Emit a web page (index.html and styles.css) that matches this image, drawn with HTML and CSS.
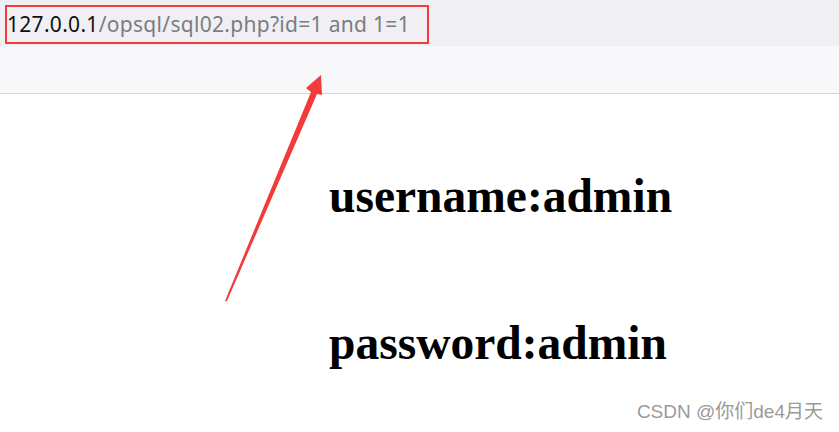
FILE: index.html
```html
<!DOCTYPE html>
<html lang="en">
<head>
    <meta charset="UTF-8">
    <title>sql02</title>
    <link rel="stylesheet" href="styles.css">
</head>
<body>
    <div class="address-bar">
        <div class="url-box">
            <span class="host">127.0.0.1</span><span class="path">/opsql/sql02.php?id=1 and 1=1</span>
        </div>
    </div>
    <div class="toolbar"></div>

    <div class="page">
        <h1>username:admin</h1>
        <h1>password:admin</h1>
    </div>

    <!-- annotation arrow drawn over the screenshot -->
    <svg class="arrow" width="839" height="432" viewBox="0 0 839 432">
        <polygon points="225,301 311,92 306,88 321,75 322,95 317,94 227,301" fill="#f23b3b"/>
    </svg>

    <div class="watermark">CSDN @你们de4月天</div>
</body>
</html>
```

FILE: styles.css
```css
* { box-sizing: border-box; }
body {
    margin: 0;
    background-color: #ffffff;
    font-family: "Liberation Serif", "Times New Roman", serif;
    width: 839px;
    height: 432px;
    overflow: hidden;
    position: relative;
}
.address-bar {
    height: 46px;
    background-color: #f0f0f4;
    padding: 5px 0 0 5px;
}
.url-box {
    width: 424px;
    height: 39px;
    border: 2px solid #f23b3b;
    padding: 4px 0 0 0;
    font-family: "Noto Sans", sans-serif;
    font-size: 21px;
    letter-spacing: 0.3px;
    line-height: 27px;
    white-space: nowrap;
}
.url-box .host {
    color: #111111;
}
.url-box .path {
    color: #7c7c80;
}
.toolbar {
    height: 48px;
    background-color: #f8f8fa;
    border-bottom: 1px solid #d4d4d6;
}
.page {
    padding: 78px 0 0 329px;
}
.page h1 {
    margin: 0 0 99px 0;
    font-size: 47.5px;
    line-height: 48px;
    font-weight: bold;
    color: #000000;
}
.page h1:last-child {
    margin-bottom: 0;
}
.arrow {
    position: absolute;
    left: 0;
    top: 0;
}
.watermark {
    position: absolute;
    right: 16px;
    bottom: 9px;
    font-family: "Liberation Sans", "Noto Sans CJK SC", sans-serif;
    font-size: 19px;
    color: #9a9a9a;
}
```
